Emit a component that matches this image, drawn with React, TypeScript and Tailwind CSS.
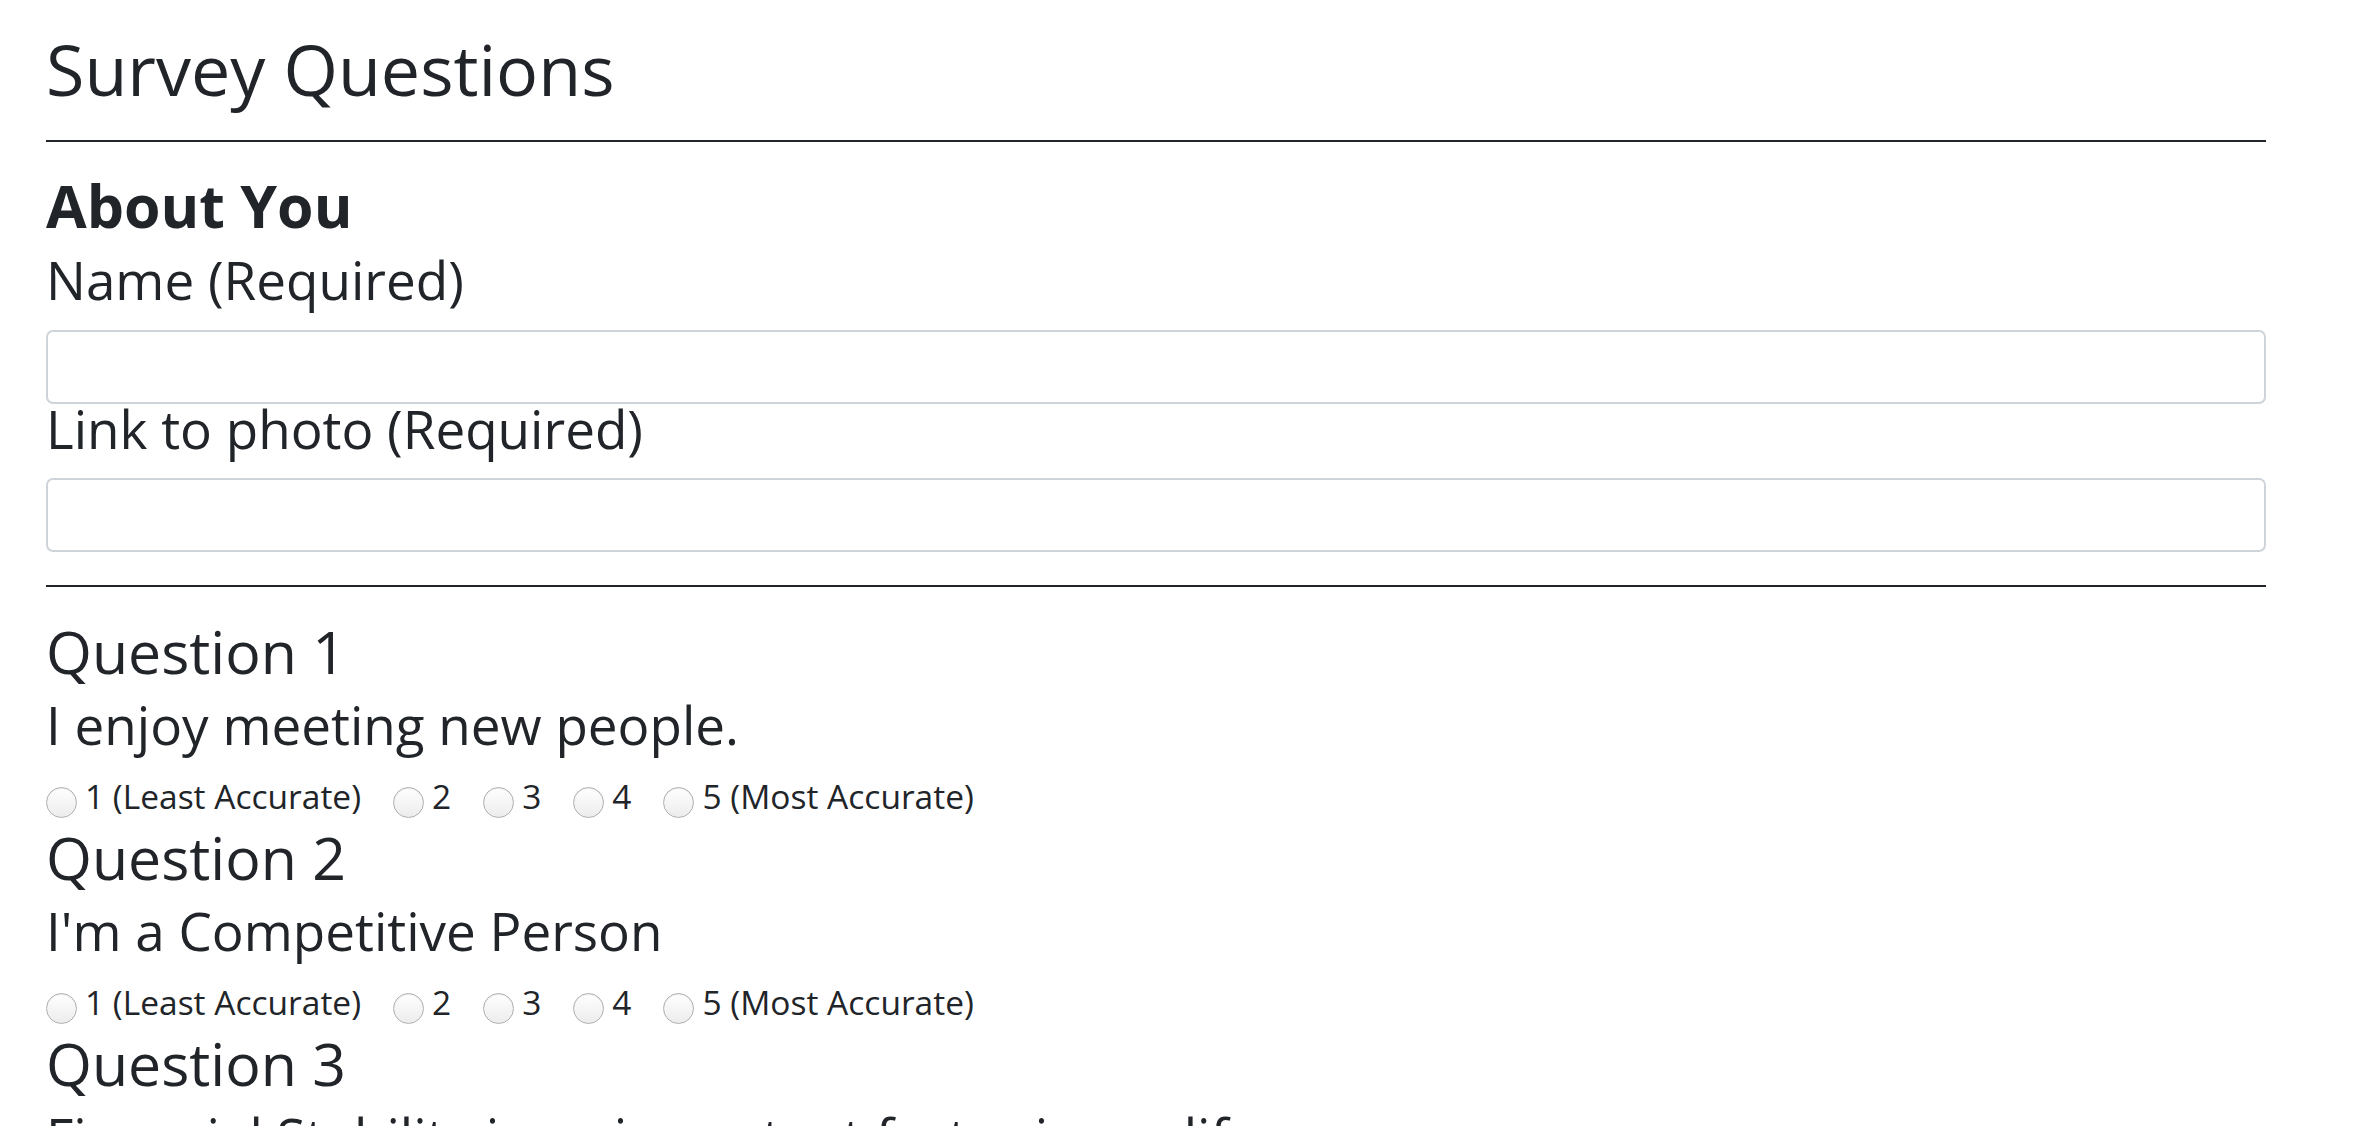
import React from 'react';

const questions = [
  { id: 1, text: 'I enjoy meeting new people.' },
  { id: 2, text: "I'm a Competitive Person" },
  { id: 3, text: 'Financial Stability is an important factor in my life.' },
];

const choices = ['1 (Least Accurate)', '2', '3', '4', '5 (Most Accurate)'];

function Scale({ name }: { name: string }) {
  return (
    <div className="mt-[20px] flex h-[40px] items-start text-[33.5px] leading-[40px]">
      {choices.map((c, i) => (
        <label key={c} className="mr-[32px] flex items-start">
          <input
            type="radio"
            name={name}
            value={i + 1}
            className="mt-[11px] mr-[8px] h-[31px] w-[31px] shrink-0 appearance-none rounded-full border border-[#b0b0b0] bg-gradient-to-b from-white to-[#ececec] shadow-[inset_0_1px_1px_rgba(0,0,0,0.08)]"
          />
          <span>{c}</span>
        </label>
      ))}
    </div>
  );
}

export default function App() {
  return (
    <div
      className="min-h-screen bg-white text-[#212529]"
      style={{ fontFamily: '"Open Sans", "Liberation Sans", sans-serif' }}
    >
      <div className="ml-[46px] w-[2220px] pt-[28px]">
        <h1 className="text-[70px] leading-[83px] font-normal">Survey Questions</h1>
        <hr className="mt-[29px] border-t-2 border-[#212529]" />

        <h2 className="mt-[28px] text-[59px] leading-[71px] font-bold">About You</h2>

        <label className="mt-[17px] block text-[53px] leading-[44px]">Name (Required)</label>
        <input
          type="text"
          className="mt-[28px] block h-[74px] w-full rounded-[7px] border-2 border-[#ced4da] bg-white"
        />
        <label className="mt-[3px] block text-[53px] leading-[44px]">Link to photo (Required)</label>
        <input
          type="text"
          className="mt-[27px] block h-[74px] w-full rounded-[7px] border-2 border-[#ced4da] bg-white"
        />

        <hr className="mt-[33px] border-t-2 border-[#212529]" />

        <div className="mt-[31px]">
          {questions.map((q, i) => (
            <section key={q.id} className={i === 0 ? '' : 'mt-[8px]'}>
              <h3 className="text-[59px] leading-[67px] font-normal">Question {q.id}</h3>
              <p className="mt-[9px] text-[53px] leading-[62px]">{q.text}</p>
              <Scale name={`q${q.id}`} />
            </section>
          ))}
        </div>
      </div>
    </div>
  );
}
